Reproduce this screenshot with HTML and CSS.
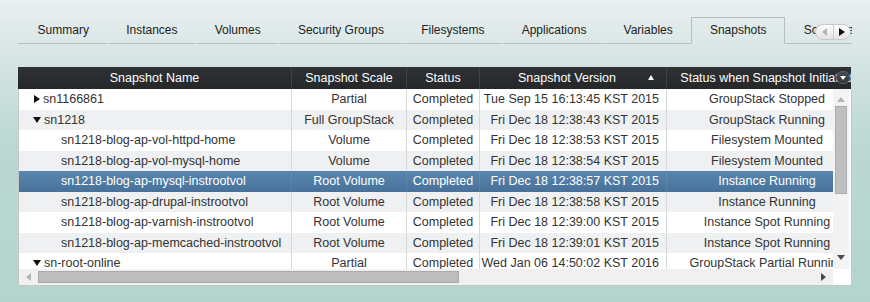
FILE: index.html
```html
<!DOCTYPE html>
<html lang="en">
<head>
  <meta charset="UTF-8" />
  <title>Snapshots</title>
  <link rel="stylesheet" href="styles.css">
</head>
<body>

  <div class="tabbar">
    <div class="tabs">
      <div class="tab">Summary</div>
      <div class="tab">Instances</div>
      <div class="tab">Volumes</div>
      <div class="tab">Security Groups</div>
      <div class="tab">Filesystems</div>
      <div class="tab">Applications</div>
      <div class="tab">Variables</div>
      <div class="tab active">Snapshots</div>
      <div class="tab">Schedules</div>
    </div>
    <div class="tab-scroller">
      <span class="ts-btn"><i class="tri-left off"></i></span>
      <span class="ts-btn"><i class="tri-right"></i></span>
    </div>
  </div>

  <div class="grid">
    <div class="grid-head">
      <div class="hcell c1">Snapshot Name</div>
      <div class="hcell c2">Snapshot Scale</div>
      <div class="hcell c3">Status</div>
      <div class="hcell c4 sorted">Snapshot Version</div>
      <div class="hcell c5">Status when Snapshot Initiated</div>
      <span class="head-menu"><i class="tri-down white"></i></span>
    </div>

    <div class="grid-body">
      <div class="rows">
        <div class="row">
          <div class="cell c1 parent"><i class="tri-right"></i>sn1166861</div>
          <div class="cell c2">Partial</div>
          <div class="cell c3">Completed</div>
          <div class="cell c4">Tue Sep 15 16:13:45 KST 2015</div>
          <div class="cell c5">GroupStack Stopped</div>
        </div>
        <div class="row alt">
          <div class="cell c1 parent"><i class="tri-down"></i>sn1218</div>
          <div class="cell c2">Full GroupStack</div>
          <div class="cell c3">Completed</div>
          <div class="cell c4">Fri Dec 18 12:38:43 KST 2015</div>
          <div class="cell c5">GroupStack Running</div>
        </div>
        <div class="row">
          <div class="cell c1 child">sn1218-blog-ap-vol-httpd-home</div>
          <div class="cell c2">Volume</div>
          <div class="cell c3">Completed</div>
          <div class="cell c4">Fri Dec 18 12:38:53 KST 2015</div>
          <div class="cell c5">Filesystem Mounted</div>
        </div>
        <div class="row alt">
          <div class="cell c1 child">sn1218-blog-ap-vol-mysql-home</div>
          <div class="cell c2">Volume</div>
          <div class="cell c3">Completed</div>
          <div class="cell c4">Fri Dec 18 12:38:54 KST 2015</div>
          <div class="cell c5">Filesystem Mounted</div>
        </div>
        <div class="row selected">
          <div class="cell c1 child">sn1218-blog-ap-mysql-instrootvol</div>
          <div class="cell c2">Root Volume</div>
          <div class="cell c3">Completed</div>
          <div class="cell c4">Fri Dec 18 12:38:57 KST 2015</div>
          <div class="cell c5">Instance Running</div>
        </div>
        <div class="row alt">
          <div class="cell c1 child">sn1218-blog-ap-drupal-instrootvol</div>
          <div class="cell c2">Root Volume</div>
          <div class="cell c3">Completed</div>
          <div class="cell c4">Fri Dec 18 12:38:58 KST 2015</div>
          <div class="cell c5">Instance Running</div>
        </div>
        <div class="row">
          <div class="cell c1 child">sn1218-blog-ap-varnish-instrootvol</div>
          <div class="cell c2">Root Volume</div>
          <div class="cell c3">Completed</div>
          <div class="cell c4">Fri Dec 18 12:39:00 KST 2015</div>
          <div class="cell c5">Instance Spot Running</div>
        </div>
        <div class="row alt">
          <div class="cell c1 child">sn1218-blog-ap-memcached-instrootvol</div>
          <div class="cell c2">Root Volume</div>
          <div class="cell c3">Completed</div>
          <div class="cell c4">Fri Dec 18 12:39:01 KST 2015</div>
          <div class="cell c5">Instance Spot Running</div>
        </div>
        <div class="row">
          <div class="cell c1 parent"><i class="tri-down"></i>sn-root-online</div>
          <div class="cell c2">Partial</div>
          <div class="cell c3">Completed</div>
          <div class="cell c4">Wed Jan 06 14:50:02 KST 2016</div>
          <div class="cell c5">GroupStack Partial Running</div>
        </div>
      </div>

      <div class="vscroll">
        <i class="tri-up off"></i>
        <div class="vthumb"></div>
        <i class="tri-down dark"></i>
      </div>
      <div class="hscroll">
        <i class="tri-left off"></i>
        <div class="hthumb"></div>
        <i class="tri-right dark"></i>
      </div>
      <div class="corner"></div>
    </div>
  </div>

</body>
</html>
```

FILE: styles.css
```css
body {
  margin: 0; height: 302px; overflow: hidden;
  font-family: "Liberation Sans", Arial, sans-serif; color: #333;
  background: linear-gradient(to bottom, #ebf0f2 0, #d5e4e3 60px, #bad8d1 150px, #b3d5cd 302px);
}

/* triangles */
.tri-right, .tri-left, .tri-up, .tri-down { display: inline-block; width: 0; height: 0; flex: none; }
.tri-right { border-left: 6px solid #111; border-top: 4px solid transparent; border-bottom: 4px solid transparent; }
.tri-left { border-right: 5px solid #111; border-top: 4px solid transparent; border-bottom: 4px solid transparent; }
.tri-down { border-top: 6px solid #111; border-left: 4px solid transparent; border-right: 4px solid transparent; }
.tri-up { border-bottom: 5px solid #111; border-left: 4px solid transparent; border-right: 4px solid transparent; }
.tri-left.off { border-right-color: #b4b4b4; }
.tri-up.off { border-bottom-color: #b4b4b4; }
.tri-right.dark { border-left-color: #4a4a4a; border-left-width: 5px; }
.tri-down.dark { border-top-color: #4a4a4a; border-top-width: 5px; }
.tri-down.white { border-top-color: #fff; border-top-width: 4px; border-left-width: 3px; border-right-width: 3px; }

/* tabs */
.tabbar { position: relative; margin-left: 18px; width: 834px; padding-top: 17px; }
.tabs { display: flex; overflow: hidden; font-size: 12px; color: #222; }
.tabs::before { content: ""; flex: none; width: 1px; border-bottom: 1px solid #bcbcbc; }
.tab {
  flex: none; padding: 0 17.6px; line-height: 25px; white-space: nowrap;
  border: 1px solid transparent; border-bottom-color: #bcbcbc;
}
.tab.active { border-color: #bcbcbc; border-bottom-color: transparent; }
.tab-scroller {
  position: absolute; right: 1px; top: 24px; width: 36px; height: 16px;
  display: flex; box-sizing: border-box; overflow: hidden;
  border: 1px solid #c9c9c9; border-radius: 8px;
  background: linear-gradient(#fdfdfd, #e4e4e4);
}
.ts-btn { flex: 1; display: flex; align-items: center; justify-content: center; }
.ts-btn + .ts-btn { border-left: 1px solid #cfcfcf; }

/* grid */
.grid { margin: 23px 0 0 18px; width: 833px; font-size: 12.5px; }
.grid-head {
  position: relative; display: flex; height: 22px; overflow: hidden;
  background: linear-gradient(#2f3234, #252729); color: #fff;
}
.hcell {
  flex: none; box-sizing: border-box; line-height: 22px; text-align: center;
  white-space: nowrap; overflow: hidden; border-right: 1px solid #3f4244;
}
.hcell.sorted { position: relative; padding-right: 12px; }
.hcell.sorted::after {
  content: ""; position: absolute; right: 12px; top: 8px;
  border-bottom: 5px solid #fff; border-left: 3px solid transparent; border-right: 3px solid transparent;
}
.head-menu {
  position: absolute; right: 1px; top: 4px; width: 14px; height: 13px; box-sizing: border-box;
  display: flex; align-items: center; justify-content: center;
  border: 1px solid #5c5f62; border-radius: 6px; background: linear-gradient(#4a4d50, #35383a);
}
.c1 { width: 274px; }
.c2 { width: 115px; }
.c3 { width: 73px; }
.c4 { width: 187px; }
.c5 { width: 200px; }

.grid-body {
  display: grid; grid-template-columns: 814px 16px; grid-template-rows: 180px 16px;
  width: 832px; border: 1px solid #c6c6c6; border-top: 0; background: #fff;
}
.rows { overflow: hidden; }
.row { display: flex; height: 20.5px; line-height: 20.5px; background: #fff; }
.row.alt { background: #eef0f1; }
.row.selected { background: linear-gradient(#5a86ad, #47719a); color: #fff; }
.cell {
  flex: none; box-sizing: border-box; white-space: nowrap; overflow: hidden;
  text-align: center; border-right: 1px solid #d8d8d8;
}
.row .c1 { width: 273px; text-align: left; }
.row .c4 { text-align: right; padding-right: 7px; }
.row .c5 { border-right: 0; }
.row.selected .cell { border-right-color: rgba(255, 255, 255, 0.08); }
.cell.parent { display: flex; align-items: center; padding-left: 15px; }
.cell.parent i { margin-right: 3px; }
.cell.parent .tri-down { margin-left: -1px; margin-right: 3px; }
.cell.child { padding-left: 42px; }

.vscroll {
  display: flex; flex-direction: column; align-items: center;
  padding: 8px 0 9px; background: #f3f3f3;
}
.vthumb {
  width: 12px; height: 88px; margin-top: 4px; box-sizing: border-box;
  background: #bfbfbf; border: 1px solid #adadad;
}
.vscroll .tri-down { margin-top: auto; }
.hscroll { display: flex; align-items: center; padding: 0 7px; background: #f0f0f0; }
.hthumb {
  width: 421px; height: 12px; margin-left: 7px; box-sizing: border-box;
  background: #bdbdbd; border: 1px solid #aaa;
}
.hscroll .tri-right { margin-left: auto; }
.corner { background: #fff; }
```
